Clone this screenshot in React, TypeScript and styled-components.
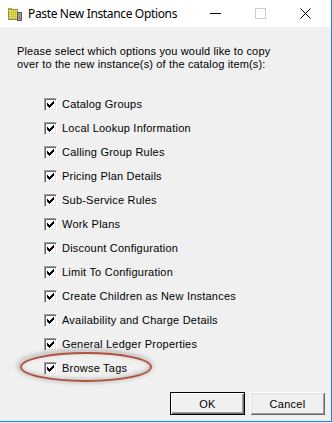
import React from "react";
import styled, { createGlobalStyle } from "styled-components";

const GlobalStyle = createGlobalStyle`
  html, body { margin: 0; padding: 0; background: #f0f0f0; overflow: hidden; }
  * { box-sizing: border-box; }
`;

const Window = styled.div`
  position: relative;
  width: 332px;
  height: 422px;
  display: flex;
  flex-direction: column;
  background: #f0f0f0;
  border-right: 1px solid #1883d7;
  border-bottom: 1px solid #1883d7;
`;

const TitleBar = styled.div`
  height: 27px;
  background: #ffffff;
  display: flex;
  align-items: center;
  padding-left: 7px;
  flex-shrink: 0;
`;

const Title = styled.span`
  font-family: "Segoe UI", "Noto Sans", "Open Sans", sans-serif;
  font-size: 12px;
  color: #000;
  margin-left: 5px;
  flex: 1;
  letter-spacing: -0.35px;
`;

const Controls = styled.div`
  display: flex;
  align-items: center;
  height: 100%;
  padding-right: 3px;
`;

const CtrlBtn = styled.div`
  width: 45px;
  height: 100%;
  display: flex;
  align-items: center;
  justify-content: center;
`;

const Body = styled.div`
  flex: 1;
  display: flex;
  flex-direction: column;
  padding: 18px 0 0 17px;
  font-family: "Liberation Sans", Arial, sans-serif;
  font-size: 11px;
  color: #000;
`;

const Intro = styled.p`
  margin: 0;
  line-height: 13px;
  letter-spacing: 0.15px;
`;

const List = styled.div`
  margin: 27px 0 0 27px;
  display: flex;
  flex-direction: column;
  gap: 11px;
`;

const Row = styled.label`
  display: flex;
  align-items: center;
  height: 13px;
  line-height: 13px;
  gap: 5px;
  letter-spacing: 0.22px;
`;

const Box = styled.span`
  width: 13px;
  height: 13px;
  background: #fff;
  border-top: 1px solid #a0a0a0;
  border-left: 1px solid #a0a0a0;
  border-right: 1px solid #ffffff;
  border-bottom: 1px solid #ffffff;
  box-shadow: inset 1px 1px 0 #696969, inset -1px -1px 0 #e3e3e3;
  position: relative;
  flex-shrink: 0;
`;

const Footer = styled.div`
  margin-top: auto;
  display: flex;
  justify-content: flex-end;
  gap: 5px;
  padding: 0 6px 6px 0;
`;

const Button = styled.button<{ $default?: boolean }>`
  width: 75px;
  height: 23px;
  padding: 0;
  background: #f0f0f0;
  font-family: "Liberation Sans", Arial, sans-serif;
  font-size: 11px;
  color: #000;
  border: ${(p) => (p.$default ? "1px solid #000" : "none")};
  box-shadow: ${(p) =>
    p.$default
      ? "inset 1px 1px 0 #fff, inset -1px -1px 0 #696969, inset -2px -2px 0 #a0a0a0"
      : "inset 1px 1px 0 #fff, inset -1px -1px 0 #696969, inset 2px 2px 0 #e3e3e3, inset -2px -2px 0 #a0a0a0"};
  letter-spacing: 0.3px;
`;

const Oval = styled.svg`
  position: absolute;
  left: 10px;
  top: 344px;
  pointer-events: none;
`;

const AppIcon = () => (
  <svg width="16" height="16" viewBox="0 0 16 16" shapeRendering="crispEdges">
    <rect x="1" y="3" width="10" height="11" fill="#8a8a6a" />
    <rect x="2" y="4" width="8" height="9" fill="#f4ec3c" />
    <path d="M2 6h8M2 8h8M2 10h8M2 12h8M4 4v9M6 4v9M8 4v9" stroke="#c9c24a" strokeWidth="1" />
    <rect x="1" y="2" width="4" height="2" fill="#b0a050" />
    <rect x="10" y="6" width="5" height="9" fill="#5a5a5a" />
    <rect x="11" y="7" width="3" height="7" fill="#9a9a9a" />
    <rect x="12" y="11" width="1" height="1" fill="#d03030" />
  </svg>
);

const Check = () => (
  <svg width="7" height="7" viewBox="0 0 7 7" shapeRendering="crispEdges" style={{ position: "absolute", left: 2, top: 2 }}>
    <path
      d="M0 2h1v3h-1zM1 3h1v3h-1zM2 4h1v3h-1zM3 3h1v3h-1zM4 2h1v3h-1zM5 1h1v3h-1zM6 0h1v3h-1z"
      fill="#000"
    />
  </svg>
);

const items = [
  "Catalog Groups",
  "Local Lookup Information",
  "Calling Group Rules",
  "Pricing Plan Details",
  "Sub-Service Rules",
  "Work Plans",
  "Discount Configuration",
  "Limit To Configuration",
  "Create Children as New Instances",
  "Availability and Charge Details",
  "General Ledger Properties",
  "Browse Tags",
];

export default function App() {
  return (
    <>
      <GlobalStyle />
      <Window>
        <TitleBar>
          <AppIcon />
          <Title>Paste New Instance Options</Title>
          <Controls>
            <CtrlBtn>
              <svg width="11" height="11" viewBox="0 0 11 11" shapeRendering="crispEdges">
                <path d="M0 5.5h11" stroke="#000" strokeWidth="1" />
              </svg>
            </CtrlBtn>
            <CtrlBtn>
              <svg width="11" height="11" viewBox="0 0 11 11" shapeRendering="crispEdges">
                <rect x="0.5" y="0.5" width="10" height="10" fill="none" stroke="#cccccc" />
              </svg>
            </CtrlBtn>
            <CtrlBtn>
              <svg width="11" height="11" viewBox="0 0 11 11">
                <path d="M0.5 0.5l10 10M10.5 0.5l-10 10" stroke="#000" strokeWidth="1" />
              </svg>
            </CtrlBtn>
          </Controls>
        </TitleBar>
        <Body>
          <Intro>
            Please select which options you would like to copy
            <br />
            over to the new instance(s) of the catalog item(s):
          </Intro>
          <List>
            {items.map((t) => (
              <Row key={t}>
                <Box>
                  <Check />
                </Box>
                <span>{t}</span>
              </Row>
            ))}
          </List>
          <Footer>
            <Button $default>OK</Button>
            <Button>Cancel</Button>
          </Footer>
        </Body>
        <Oval width="156" height="48" viewBox="0 0 156 48">
          <defs>
            <filter id="blur" x="-20%" y="-50%" width="140%" height="200%">
              <feGaussianBlur stdDeviation="2" />
            </filter>
          </defs>
          <ellipse cx="75" cy="22" rx="66" ry="15" fill="none" stroke="#9a9a9a" strokeWidth="3" filter="url(#blur)" opacity="0.8" />
          <ellipse cx="76" cy="23" rx="65" ry="14" fill="none" stroke="#b4513c" strokeWidth="1.8" />
        </Oval>
      </Window>
    </>
  );
}
